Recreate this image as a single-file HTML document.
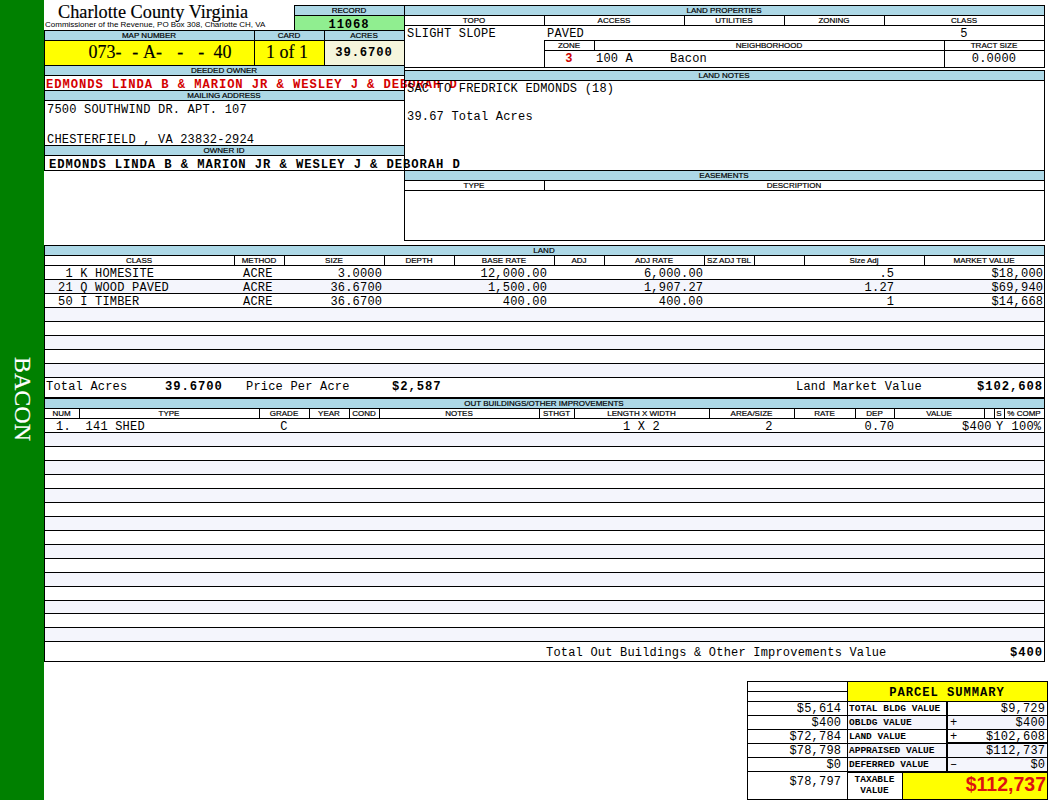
<!DOCTYPE html>
<html><head><meta charset="utf-8"><style>
html,body{margin:0;padding:0;background:#fff;width:1050px;height:800px;overflow:hidden;position:relative}
div{position:absolute;box-sizing:border-box}
.t{white-space:nowrap}
</style></head><body>
<div style="left:0px;top:0px;width:44px;height:800px;background:#008000"></div>
<div class="t" style="left:58px;top:3.17px;font-family:'Liberation Serif',serif;font-size:18.3px;line-height:18.3px;color:#000;-webkit-text-stroke:0.15px #000;">Charlotte County Virginia</div>
<div class="t" style="left:45px;top:21.23px;font-family:'Liberation Sans',sans-serif;font-size:8.001px;line-height:8.001px;color:#000;">Commissioner of the Revenue, PO Box 308, Charlotte CH, VA</div>
<div style="left:295px;top:6px;width:109px;height:9px;background:#add8e6"></div>
<div style="left:295px;top:16px;width:109px;height:14px;background:#90ee90"></div>
<div style="left:294px;top:5px;width:111px;height:1px;background:#000"></div>
<div style="left:294px;top:30px;width:111px;height:1px;background:#000"></div>
<div style="left:294px;top:5px;width:1px;height:26px;background:#000"></div>
<div style="left:404px;top:5px;width:1px;height:26px;background:#000"></div>
<div style="left:294px;top:15px;width:111px;height:1px;background:#000"></div>
<div class="t" style="left:294px;top:7.23px;font-family:'Liberation Sans',sans-serif;font-size:8px;line-height:8px;color:#000;width:110px;text-align:center;-webkit-text-stroke:0.2px #000;">RECORD</div>
<div class="t" style="left:294px;top:18.65px;font-family:'Liberation Mono',monospace;font-size:12.2px;line-height:12.2px;color:#000;font-weight:bold;width:110px;text-align:center;letter-spacing:0.92px;">11068</div>
<div style="left:45px;top:31px;width:359px;height:9px;background:#add8e6"></div>
<div style="left:45px;top:41px;width:209px;height:24px;background:#ffff00"></div>
<div style="left:255px;top:41px;width:69px;height:24px;background:#ffff00"></div>
<div style="left:325px;top:41px;width:79px;height:24px;background:#f5f5dc"></div>
<div style="left:44px;top:30px;width:361px;height:1px;background:#000"></div>
<div style="left:44px;top:65px;width:361px;height:1px;background:#000"></div>
<div style="left:44px;top:30px;width:1px;height:36px;background:#000"></div>
<div style="left:404px;top:30px;width:1px;height:36px;background:#000"></div>
<div style="left:44px;top:40px;width:361px;height:1px;background:#000"></div>
<div style="left:254px;top:30px;width:1px;height:36px;background:#000"></div>
<div style="left:324px;top:30px;width:1px;height:36px;background:#000"></div>
<div class="t" style="left:44px;top:32.23px;font-family:'Liberation Sans',sans-serif;font-size:8px;line-height:8px;color:#000;width:210px;text-align:center;-webkit-text-stroke:0.2px #000;">MAP NUMBER</div>
<div class="t" style="left:254px;top:32.23px;font-family:'Liberation Sans',sans-serif;font-size:8px;line-height:8px;color:#000;width:70px;text-align:center;-webkit-text-stroke:0.2px #000;">CARD</div>
<div class="t" style="left:324px;top:32.23px;font-family:'Liberation Sans',sans-serif;font-size:8px;line-height:8px;color:#000;width:80px;text-align:center;-webkit-text-stroke:0.2px #000;">ACRES</div>
<div class="t" style="left:88.5px;top:42.92px;font-family:'Liberation Serif',serif;font-size:18px;line-height:18px;color:#000;-webkit-text-stroke:0.15px #000;">073-</div>
<div class="t" style="left:132.3px;top:42.92px;font-family:'Liberation Serif',serif;font-size:18px;line-height:18px;color:#000;-webkit-text-stroke:0.15px #000;">-</div>
<div class="t" style="left:143px;top:42.92px;font-family:'Liberation Serif',serif;font-size:18px;line-height:18px;color:#000;-webkit-text-stroke:0.15px #000;">A-</div>
<div class="t" style="left:177.2px;top:42.92px;font-family:'Liberation Serif',serif;font-size:18px;line-height:18px;color:#000;-webkit-text-stroke:0.15px #000;">-</div>
<div class="t" style="left:198.2px;top:42.92px;font-family:'Liberation Serif',serif;font-size:18px;line-height:18px;color:#000;-webkit-text-stroke:0.15px #000;">-</div>
<div class="t" style="left:213.6px;top:42.92px;font-family:'Liberation Serif',serif;font-size:18px;line-height:18px;color:#000;-webkit-text-stroke:0.15px #000;">40</div>
<div class="t" style="left:266px;top:42.92px;font-family:'Liberation Serif',serif;font-size:18px;line-height:18px;color:#000;-webkit-text-stroke:0.15px #000;white-space:pre;">1 of 1</div>
<div class="t" style="left:324px;top:46.65px;font-family:'Liberation Mono',monospace;font-size:12.2px;line-height:12.2px;color:#000;font-weight:bold;width:80px;text-align:center;letter-spacing:0.92px;">39.6700</div>
<div style="left:45px;top:66px;width:359px;height:9px;background:#add8e6"></div>
<div style="left:45px;top:91px;width:359px;height:9px;background:#add8e6"></div>
<div style="left:45px;top:146px;width:359px;height:9px;background:#add8e6"></div>
<div style="left:44px;top:65px;width:1px;height:106px;background:#000"></div>
<div style="left:404px;top:5px;width:1px;height:166px;background:#000"></div>
<div style="left:44px;top:75px;width:361px;height:1px;background:#000"></div>
<div style="left:44px;top:90px;width:361px;height:1px;background:#000"></div>
<div style="left:44px;top:100px;width:361px;height:1px;background:#000"></div>
<div style="left:44px;top:145px;width:361px;height:1px;background:#000"></div>
<div style="left:44px;top:155px;width:361px;height:1px;background:#000"></div>
<div style="left:44px;top:170px;width:361px;height:1px;background:#000"></div>
<div class="t" style="left:44px;top:67.23px;font-family:'Liberation Sans',sans-serif;font-size:8px;line-height:8px;color:#000;width:360px;text-align:center;-webkit-text-stroke:0.2px #000;">DEEDED OWNER</div>
<div class="t" style="left:44px;top:92.23px;font-family:'Liberation Sans',sans-serif;font-size:8px;line-height:8px;color:#000;width:360px;text-align:center;-webkit-text-stroke:0.2px #000;">MAILING ADDRESS</div>
<div class="t" style="left:44px;top:147.23px;font-family:'Liberation Sans',sans-serif;font-size:8px;line-height:8px;color:#000;width:360px;text-align:center;-webkit-text-stroke:0.2px #000;">OWNER ID</div>
<div class="t" style="left:46px;top:78.65px;font-family:'Liberation Mono',monospace;font-size:12.2px;line-height:12.2px;color:#d40000;font-weight:bold;letter-spacing:0.92px;white-space:pre;">EDMONDS LINDA B &amp; MARION JR &amp; WESLEY J &amp; DEBORAH D</div>
<div class="t" style="left:47px;top:103.80px;font-family:'Liberation Mono',monospace;font-size:12.0px;line-height:12.0px;color:#000;letter-spacing:0.2px;">7500 SOUTHWIND DR. APT. 107</div>
<div class="t" style="left:47px;top:133.80px;font-family:'Liberation Mono',monospace;font-size:12.0px;line-height:12.0px;color:#000;letter-spacing:0.2px;">CHESTERFIELD , VA 23832-2924</div>
<div class="t" style="left:49px;top:158.65px;font-family:'Liberation Mono',monospace;font-size:12.2px;line-height:12.2px;color:#000;font-weight:bold;letter-spacing:0.92px;white-space:pre;">EDMONDS LINDA B &amp; MARION JR &amp; WESLEY J &amp; DEBORAH D</div>
<div style="left:405px;top:6px;width:639px;height:9px;background:#add8e6"></div>
<div style="left:404px;top:5px;width:641px;height:1px;background:#000"></div>
<div style="left:404px;top:67px;width:641px;height:1px;background:#000"></div>
<div style="left:404px;top:5px;width:1px;height:63px;background:#000"></div>
<div style="left:1044px;top:5px;width:1px;height:63px;background:#000"></div>
<div style="left:404px;top:15px;width:641px;height:1px;background:#000"></div>
<div style="left:404px;top:25px;width:641px;height:1px;background:#000"></div>
<div style="left:544px;top:15px;width:1px;height:11px;background:#000"></div>
<div style="left:684px;top:15px;width:1px;height:11px;background:#000"></div>
<div style="left:784px;top:15px;width:1px;height:11px;background:#000"></div>
<div style="left:884px;top:15px;width:1px;height:11px;background:#000"></div>
<div class="t" style="left:404px;top:7.23px;font-family:'Liberation Sans',sans-serif;font-size:8px;line-height:8px;color:#000;width:640px;text-align:center;-webkit-text-stroke:0.2px #000;">LAND PROPERTIES</div>
<div class="t" style="left:404px;top:17.23px;font-family:'Liberation Sans',sans-serif;font-size:8px;line-height:8px;color:#000;width:140px;text-align:center;-webkit-text-stroke:0.2px #000;">TOPO</div>
<div class="t" style="left:544px;top:17.23px;font-family:'Liberation Sans',sans-serif;font-size:8px;line-height:8px;color:#000;width:140px;text-align:center;-webkit-text-stroke:0.2px #000;">ACCESS</div>
<div class="t" style="left:684px;top:17.23px;font-family:'Liberation Sans',sans-serif;font-size:8px;line-height:8px;color:#000;width:100px;text-align:center;-webkit-text-stroke:0.2px #000;">UTILITIES</div>
<div class="t" style="left:784px;top:17.23px;font-family:'Liberation Sans',sans-serif;font-size:8px;line-height:8px;color:#000;width:100px;text-align:center;-webkit-text-stroke:0.2px #000;">ZONING</div>
<div class="t" style="left:884px;top:17.23px;font-family:'Liberation Sans',sans-serif;font-size:8px;line-height:8px;color:#000;width:160px;text-align:center;-webkit-text-stroke:0.2px #000;">CLASS</div>
<div class="t" style="left:407px;top:27.80px;font-family:'Liberation Mono',monospace;font-size:12.0px;line-height:12.0px;color:#000;letter-spacing:0.2px;">SLIGHT SLOPE</div>
<div class="t" style="left:547px;top:27.80px;font-family:'Liberation Mono',monospace;font-size:12.0px;line-height:12.0px;color:#000;letter-spacing:0.2px;">PAVED</div>
<div class="t" style="left:884px;top:27.80px;font-family:'Liberation Mono',monospace;font-size:12.0px;line-height:12.0px;color:#000;width:160px;text-align:center;letter-spacing:0.2px;">5</div>
<div style="left:544px;top:40px;width:501px;height:1px;background:#000"></div>
<div style="left:544px;top:67px;width:501px;height:1px;background:#000"></div>
<div style="left:544px;top:40px;width:1px;height:28px;background:#000"></div>
<div style="left:1044px;top:40px;width:1px;height:28px;background:#000"></div>
<div style="left:544px;top:50px;width:501px;height:1px;background:#000"></div>
<div style="left:594px;top:40px;width:1px;height:11px;background:#000"></div>
<div style="left:944px;top:40px;width:1px;height:28px;background:#000"></div>
<div class="t" style="left:544px;top:42.23px;font-family:'Liberation Sans',sans-serif;font-size:8px;line-height:8px;color:#000;width:50px;text-align:center;-webkit-text-stroke:0.2px #000;">ZONE</div>
<div class="t" style="left:594px;top:42.23px;font-family:'Liberation Sans',sans-serif;font-size:8px;line-height:8px;color:#000;width:350px;text-align:center;-webkit-text-stroke:0.2px #000;">NEIGHBORHOOD</div>
<div class="t" style="left:944px;top:42.23px;font-family:'Liberation Sans',sans-serif;font-size:8px;line-height:8px;color:#000;width:100px;text-align:center;-webkit-text-stroke:0.2px #000;">TRACT SIZE</div>
<div class="t" style="left:544px;top:52.80px;font-family:'Liberation Mono',monospace;font-size:12.0px;line-height:12.0px;color:#cc0000;font-weight:bold;width:50px;text-align:center;letter-spacing:0.2px;">3</div>
<div class="t" style="left:596px;top:52.80px;font-family:'Liberation Mono',monospace;font-size:12.0px;line-height:12.0px;color:#000;letter-spacing:0.2px;white-space:pre;">100 A     Bacon</div>
<div class="t" style="left:944px;top:52.80px;font-family:'Liberation Mono',monospace;font-size:12.0px;line-height:12.0px;color:#000;width:100px;text-align:center;letter-spacing:0.2px;">0.0000</div>
<div style="left:405px;top:71px;width:639px;height:9px;background:#add8e6"></div>
<div style="left:404px;top:70px;width:641px;height:1px;background:#000"></div>
<div style="left:404px;top:80px;width:641px;height:1px;background:#000"></div>
<div style="left:404px;top:70px;width:1px;height:101px;background:#000"></div>
<div style="left:1044px;top:70px;width:1px;height:101px;background:#000"></div>
<div class="t" style="left:404px;top:72.23px;font-family:'Liberation Sans',sans-serif;font-size:8px;line-height:8px;color:#000;width:640px;text-align:center;-webkit-text-stroke:0.2px #000;">LAND NOTES</div>
<div class="t" style="left:407px;top:82.80px;font-family:'Liberation Mono',monospace;font-size:12.0px;line-height:12.0px;color:#000;letter-spacing:0.2px;white-space:pre;">SAC TO FREDRICK EDMONDS (18)</div>
<div class="t" style="left:407px;top:110.80px;font-family:'Liberation Mono',monospace;font-size:12.0px;line-height:12.0px;color:#000;letter-spacing:0.2px;white-space:pre;">39.67 Total Acres</div>
<div style="left:405px;top:171px;width:639px;height:9px;background:#add8e6"></div>
<div style="left:404px;top:170px;width:641px;height:1px;background:#000"></div>
<div style="left:404px;top:240px;width:641px;height:1px;background:#000"></div>
<div style="left:404px;top:170px;width:1px;height:71px;background:#000"></div>
<div style="left:1044px;top:170px;width:1px;height:71px;background:#000"></div>
<div style="left:404px;top:180px;width:641px;height:1px;background:#000"></div>
<div style="left:404px;top:190px;width:641px;height:1px;background:#000"></div>
<div style="left:544px;top:180px;width:1px;height:11px;background:#000"></div>
<div class="t" style="left:404px;top:172.23px;font-family:'Liberation Sans',sans-serif;font-size:8px;line-height:8px;color:#000;width:640px;text-align:center;-webkit-text-stroke:0.2px #000;">EASEMENTS</div>
<div class="t" style="left:404px;top:182.23px;font-family:'Liberation Sans',sans-serif;font-size:8px;line-height:8px;color:#000;width:140px;text-align:center;-webkit-text-stroke:0.2px #000;">TYPE</div>
<div class="t" style="left:544px;top:182.23px;font-family:'Liberation Sans',sans-serif;font-size:8px;line-height:8px;color:#000;width:500px;text-align:center;-webkit-text-stroke:0.2px #000;">DESCRIPTION</div>
<div style="left:45px;top:246px;width:999px;height:9px;background:#add8e6"></div>
<div style="left:45px;top:280px;width:999px;height:13px;background:#f4f5fc"></div>
<div style="left:45px;top:308px;width:999px;height:13px;background:#f4f5fc"></div>
<div style="left:45px;top:336px;width:999px;height:13px;background:#f4f5fc"></div>
<div style="left:45px;top:364px;width:999px;height:13px;background:#f4f5fc"></div>
<div style="left:44px;top:245px;width:1001px;height:1px;background:#000"></div>
<div style="left:44px;top:397px;width:1001px;height:1px;background:#000"></div>
<div style="left:44px;top:245px;width:1px;height:153px;background:#000"></div>
<div style="left:1044px;top:245px;width:1px;height:153px;background:#000"></div>
<div style="left:44px;top:255px;width:1001px;height:1px;background:#000"></div>
<div style="left:44px;top:265px;width:1001px;height:1px;background:#000"></div>
<div style="left:44px;top:279px;width:1001px;height:1px;background:#000"></div>
<div style="left:44px;top:293px;width:1001px;height:1px;background:#000"></div>
<div style="left:44px;top:307px;width:1001px;height:1px;background:#000"></div>
<div style="left:44px;top:321px;width:1001px;height:1px;background:#000"></div>
<div style="left:44px;top:335px;width:1001px;height:1px;background:#000"></div>
<div style="left:44px;top:349px;width:1001px;height:1px;background:#000"></div>
<div style="left:44px;top:363px;width:1001px;height:1px;background:#000"></div>
<div style="left:44px;top:377px;width:1001px;height:1px;background:#000"></div>
<div style="left:234px;top:255px;width:1px;height:11px;background:#000"></div>
<div style="left:284px;top:255px;width:1px;height:11px;background:#000"></div>
<div style="left:384px;top:255px;width:1px;height:11px;background:#000"></div>
<div style="left:454px;top:255px;width:1px;height:11px;background:#000"></div>
<div style="left:554px;top:255px;width:1px;height:11px;background:#000"></div>
<div style="left:604px;top:255px;width:1px;height:11px;background:#000"></div>
<div style="left:704px;top:255px;width:1px;height:11px;background:#000"></div>
<div style="left:754px;top:255px;width:1px;height:11px;background:#000"></div>
<div style="left:804px;top:255px;width:1px;height:11px;background:#000"></div>
<div style="left:924px;top:255px;width:1px;height:11px;background:#000"></div>
<div class="t" style="left:44px;top:247.23px;font-family:'Liberation Sans',sans-serif;font-size:8px;line-height:8px;color:#000;width:1000px;text-align:center;-webkit-text-stroke:0.2px #000;">LAND</div>
<div class="t" style="left:44px;top:257.23px;font-family:'Liberation Sans',sans-serif;font-size:8px;line-height:8px;color:#000;width:190px;text-align:center;-webkit-text-stroke:0.2px #000;">CLASS</div>
<div class="t" style="left:234px;top:257.23px;font-family:'Liberation Sans',sans-serif;font-size:8px;line-height:8px;color:#000;width:50px;text-align:center;-webkit-text-stroke:0.2px #000;">METHOD</div>
<div class="t" style="left:284px;top:257.23px;font-family:'Liberation Sans',sans-serif;font-size:8px;line-height:8px;color:#000;width:100px;text-align:center;-webkit-text-stroke:0.2px #000;">SIZE</div>
<div class="t" style="left:384px;top:257.23px;font-family:'Liberation Sans',sans-serif;font-size:8px;line-height:8px;color:#000;width:70px;text-align:center;-webkit-text-stroke:0.2px #000;">DEPTH</div>
<div class="t" style="left:454px;top:257.23px;font-family:'Liberation Sans',sans-serif;font-size:8px;line-height:8px;color:#000;width:100px;text-align:center;-webkit-text-stroke:0.2px #000;">BASE RATE</div>
<div class="t" style="left:554px;top:257.23px;font-family:'Liberation Sans',sans-serif;font-size:8px;line-height:8px;color:#000;width:50px;text-align:center;-webkit-text-stroke:0.2px #000;">ADJ</div>
<div class="t" style="left:604px;top:257.23px;font-family:'Liberation Sans',sans-serif;font-size:8px;line-height:8px;color:#000;width:100px;text-align:center;-webkit-text-stroke:0.2px #000;">ADJ RATE</div>
<div class="t" style="left:704px;top:257.23px;font-family:'Liberation Sans',sans-serif;font-size:8px;line-height:8px;color:#000;width:50px;text-align:center;-webkit-text-stroke:0.2px #000;">SZ ADJ TBL</div>
<div class="t" style="left:754px;top:257.23px;font-family:'Liberation Sans',sans-serif;font-size:8px;line-height:8px;color:#000;width:50px;text-align:center;-webkit-text-stroke:0.2px #000;"></div>
<div class="t" style="left:804px;top:257.23px;font-family:'Liberation Sans',sans-serif;font-size:8px;line-height:8px;color:#000;width:120px;text-align:center;-webkit-text-stroke:0.2px #000;">Size Adj</div>
<div class="t" style="left:924px;top:257.23px;font-family:'Liberation Sans',sans-serif;font-size:8px;line-height:8px;color:#000;width:120px;text-align:center;-webkit-text-stroke:0.2px #000;">MARKET VALUE</div>
<div class="t" style="left:58px;top:268.30px;font-family:'Liberation Mono',monospace;font-size:12.0px;line-height:12.0px;color:#000;letter-spacing:0.2px;white-space:pre;"> 1 K HOMESITE</div>
<div class="t" style="left:243px;top:268.30px;font-family:'Liberation Mono',monospace;font-size:12.0px;line-height:12.0px;color:#000;letter-spacing:0.2px;">ACRE</div>
<div class="t" style="left:284px;top:268.30px;font-family:'Liberation Mono',monospace;font-size:12.0px;line-height:12.0px;color:#000;width:98.2px;text-align:right;letter-spacing:0.2px;">3.0000</div>
<div class="t" style="left:454px;top:268.30px;font-family:'Liberation Mono',monospace;font-size:12.0px;line-height:12.0px;color:#000;width:93.2px;text-align:right;letter-spacing:0.2px;">12,000.00</div>
<div class="t" style="left:604px;top:268.30px;font-family:'Liberation Mono',monospace;font-size:12.0px;line-height:12.0px;color:#000;width:99.2px;text-align:right;letter-spacing:0.2px;">6,000.00</div>
<div class="t" style="left:804px;top:268.30px;font-family:'Liberation Mono',monospace;font-size:12.0px;line-height:12.0px;color:#000;width:90.2px;text-align:right;letter-spacing:0.2px;">.5</div>
<div class="t" style="left:924px;top:268.30px;font-family:'Liberation Mono',monospace;font-size:12.0px;line-height:12.0px;color:#000;width:119.2px;text-align:right;letter-spacing:0.2px;">$18,000</div>
<div class="t" style="left:58px;top:282.30px;font-family:'Liberation Mono',monospace;font-size:12.0px;line-height:12.0px;color:#000;letter-spacing:0.2px;white-space:pre;">21 Q WOOD PAVED</div>
<div class="t" style="left:243px;top:282.30px;font-family:'Liberation Mono',monospace;font-size:12.0px;line-height:12.0px;color:#000;letter-spacing:0.2px;">ACRE</div>
<div class="t" style="left:284px;top:282.30px;font-family:'Liberation Mono',monospace;font-size:12.0px;line-height:12.0px;color:#000;width:98.2px;text-align:right;letter-spacing:0.2px;">36.6700</div>
<div class="t" style="left:454px;top:282.30px;font-family:'Liberation Mono',monospace;font-size:12.0px;line-height:12.0px;color:#000;width:93.2px;text-align:right;letter-spacing:0.2px;">1,500.00</div>
<div class="t" style="left:604px;top:282.30px;font-family:'Liberation Mono',monospace;font-size:12.0px;line-height:12.0px;color:#000;width:99.2px;text-align:right;letter-spacing:0.2px;">1,907.27</div>
<div class="t" style="left:804px;top:282.30px;font-family:'Liberation Mono',monospace;font-size:12.0px;line-height:12.0px;color:#000;width:90.2px;text-align:right;letter-spacing:0.2px;">1.27</div>
<div class="t" style="left:924px;top:282.30px;font-family:'Liberation Mono',monospace;font-size:12.0px;line-height:12.0px;color:#000;width:119.2px;text-align:right;letter-spacing:0.2px;">$69,940</div>
<div class="t" style="left:58px;top:296.30px;font-family:'Liberation Mono',monospace;font-size:12.0px;line-height:12.0px;color:#000;letter-spacing:0.2px;white-space:pre;">50 I TIMBER</div>
<div class="t" style="left:243px;top:296.30px;font-family:'Liberation Mono',monospace;font-size:12.0px;line-height:12.0px;color:#000;letter-spacing:0.2px;">ACRE</div>
<div class="t" style="left:284px;top:296.30px;font-family:'Liberation Mono',monospace;font-size:12.0px;line-height:12.0px;color:#000;width:98.2px;text-align:right;letter-spacing:0.2px;">36.6700</div>
<div class="t" style="left:454px;top:296.30px;font-family:'Liberation Mono',monospace;font-size:12.0px;line-height:12.0px;color:#000;width:93.2px;text-align:right;letter-spacing:0.2px;">400.00</div>
<div class="t" style="left:604px;top:296.30px;font-family:'Liberation Mono',monospace;font-size:12.0px;line-height:12.0px;color:#000;width:99.2px;text-align:right;letter-spacing:0.2px;">400.00</div>
<div class="t" style="left:804px;top:296.30px;font-family:'Liberation Mono',monospace;font-size:12.0px;line-height:12.0px;color:#000;width:90.2px;text-align:right;letter-spacing:0.2px;">1</div>
<div class="t" style="left:924px;top:296.30px;font-family:'Liberation Mono',monospace;font-size:12.0px;line-height:12.0px;color:#000;width:119.2px;text-align:right;letter-spacing:0.2px;">$14,668</div>
<div class="t" style="left:46px;top:380.80px;font-family:'Liberation Mono',monospace;font-size:12.0px;line-height:12.0px;color:#000;letter-spacing:0.2px;white-space:pre;">Total Acres</div>
<div class="t" style="left:165px;top:380.65px;font-family:'Liberation Mono',monospace;font-size:12.2px;line-height:12.2px;color:#000;font-weight:bold;letter-spacing:0.92px;">39.6700</div>
<div class="t" style="left:246px;top:380.80px;font-family:'Liberation Mono',monospace;font-size:12.0px;line-height:12.0px;color:#000;letter-spacing:0.2px;white-space:pre;">Price Per Acre</div>
<div class="t" style="left:392px;top:380.65px;font-family:'Liberation Mono',monospace;font-size:12.2px;line-height:12.2px;color:#000;font-weight:bold;letter-spacing:0.92px;">$2,587</div>
<div class="t" style="left:796px;top:380.80px;font-family:'Liberation Mono',monospace;font-size:12.0px;line-height:12.0px;color:#000;letter-spacing:0.2px;white-space:pre;">Land Market Value</div>
<div class="t" style="left:924px;top:380.65px;font-family:'Liberation Mono',monospace;font-size:12.2px;line-height:12.2px;color:#000;font-weight:bold;width:118.92px;text-align:right;letter-spacing:0.92px;">$102,608</div>
<div style="left:45px;top:399px;width:999px;height:9px;background:#add8e6"></div>
<div style="left:45px;top:433px;width:999px;height:13px;background:#f4f5fc"></div>
<div style="left:45px;top:461px;width:999px;height:13px;background:#f4f5fc"></div>
<div style="left:45px;top:489px;width:999px;height:13px;background:#f4f5fc"></div>
<div style="left:45px;top:517px;width:999px;height:13px;background:#f4f5fc"></div>
<div style="left:45px;top:545px;width:999px;height:13px;background:#f4f5fc"></div>
<div style="left:45px;top:573px;width:999px;height:13px;background:#f4f5fc"></div>
<div style="left:45px;top:601px;width:999px;height:12px;background:#f4f5fc"></div>
<div style="left:45px;top:628px;width:999px;height:13px;background:#f4f5fc"></div>
<div style="left:44px;top:398px;width:1001px;height:1px;background:#000"></div>
<div style="left:44px;top:397px;width:1001px;height:1px;background:#000"></div>
<div style="left:44px;top:661px;width:1001px;height:1px;background:#000"></div>
<div style="left:44px;top:397px;width:1px;height:265px;background:#000"></div>
<div style="left:1044px;top:397px;width:1px;height:265px;background:#000"></div>
<div style="left:44px;top:408px;width:1001px;height:1px;background:#000"></div>
<div style="left:44px;top:418px;width:1001px;height:1px;background:#000"></div>
<div style="left:44px;top:432px;width:1001px;height:1px;background:#000"></div>
<div style="left:44px;top:446px;width:1001px;height:1px;background:#000"></div>
<div style="left:44px;top:460px;width:1001px;height:1px;background:#000"></div>
<div style="left:44px;top:474px;width:1001px;height:1px;background:#000"></div>
<div style="left:44px;top:488px;width:1001px;height:1px;background:#000"></div>
<div style="left:44px;top:502px;width:1001px;height:1px;background:#000"></div>
<div style="left:44px;top:516px;width:1001px;height:1px;background:#000"></div>
<div style="left:44px;top:530px;width:1001px;height:1px;background:#000"></div>
<div style="left:44px;top:544px;width:1001px;height:1px;background:#000"></div>
<div style="left:44px;top:558px;width:1001px;height:1px;background:#000"></div>
<div style="left:44px;top:572px;width:1001px;height:1px;background:#000"></div>
<div style="left:44px;top:586px;width:1001px;height:1px;background:#000"></div>
<div style="left:44px;top:600px;width:1001px;height:1px;background:#000"></div>
<div style="left:44px;top:613px;width:1001px;height:1px;background:#000"></div>
<div style="left:44px;top:627px;width:1001px;height:1px;background:#000"></div>
<div style="left:44px;top:641px;width:1001px;height:1px;background:#000"></div>
<div style="left:79px;top:408px;width:1px;height:11px;background:#000"></div>
<div style="left:259px;top:408px;width:1px;height:11px;background:#000"></div>
<div style="left:309px;top:408px;width:1px;height:11px;background:#000"></div>
<div style="left:349px;top:408px;width:1px;height:11px;background:#000"></div>
<div style="left:379px;top:408px;width:1px;height:11px;background:#000"></div>
<div style="left:539px;top:408px;width:1px;height:11px;background:#000"></div>
<div style="left:574px;top:408px;width:1px;height:11px;background:#000"></div>
<div style="left:709px;top:408px;width:1px;height:11px;background:#000"></div>
<div style="left:794px;top:408px;width:1px;height:11px;background:#000"></div>
<div style="left:855px;top:408px;width:1px;height:11px;background:#000"></div>
<div style="left:894px;top:408px;width:1px;height:11px;background:#000"></div>
<div style="left:984px;top:408px;width:1px;height:11px;background:#000"></div>
<div style="left:994px;top:408px;width:1px;height:11px;background:#000"></div>
<div style="left:1004px;top:408px;width:1px;height:11px;background:#000"></div>
<div class="t" style="left:44px;top:400.23px;font-family:'Liberation Sans',sans-serif;font-size:8px;line-height:8px;color:#000;width:1000px;text-align:center;-webkit-text-stroke:0.2px #000;">OUT BUILDINGS/OTHER IMPROVEMENTS</div>
<div class="t" style="left:44px;top:410.23px;font-family:'Liberation Sans',sans-serif;font-size:8px;line-height:8px;color:#000;width:35px;text-align:center;-webkit-text-stroke:0.2px #000;">NUM</div>
<div class="t" style="left:79px;top:410.23px;font-family:'Liberation Sans',sans-serif;font-size:8px;line-height:8px;color:#000;width:180px;text-align:center;-webkit-text-stroke:0.2px #000;">TYPE</div>
<div class="t" style="left:259px;top:410.23px;font-family:'Liberation Sans',sans-serif;font-size:8px;line-height:8px;color:#000;width:50px;text-align:center;-webkit-text-stroke:0.2px #000;">GRADE</div>
<div class="t" style="left:309px;top:410.23px;font-family:'Liberation Sans',sans-serif;font-size:8px;line-height:8px;color:#000;width:40px;text-align:center;-webkit-text-stroke:0.2px #000;">YEAR</div>
<div class="t" style="left:349px;top:410.23px;font-family:'Liberation Sans',sans-serif;font-size:8px;line-height:8px;color:#000;width:30px;text-align:center;-webkit-text-stroke:0.2px #000;">COND</div>
<div class="t" style="left:379px;top:410.23px;font-family:'Liberation Sans',sans-serif;font-size:8px;line-height:8px;color:#000;width:160px;text-align:center;-webkit-text-stroke:0.2px #000;">NOTES</div>
<div class="t" style="left:539px;top:410.23px;font-family:'Liberation Sans',sans-serif;font-size:8px;line-height:8px;color:#000;width:35px;text-align:center;-webkit-text-stroke:0.2px #000;">STHGT</div>
<div class="t" style="left:574px;top:410.23px;font-family:'Liberation Sans',sans-serif;font-size:8px;line-height:8px;color:#000;width:135px;text-align:center;-webkit-text-stroke:0.2px #000;">LENGTH X WIDTH</div>
<div class="t" style="left:709px;top:410.23px;font-family:'Liberation Sans',sans-serif;font-size:8px;line-height:8px;color:#000;width:85px;text-align:center;-webkit-text-stroke:0.2px #000;">AREA/SIZE</div>
<div class="t" style="left:794px;top:410.23px;font-family:'Liberation Sans',sans-serif;font-size:8px;line-height:8px;color:#000;width:61px;text-align:center;-webkit-text-stroke:0.2px #000;">RATE</div>
<div class="t" style="left:855px;top:410.23px;font-family:'Liberation Sans',sans-serif;font-size:8px;line-height:8px;color:#000;width:39px;text-align:center;-webkit-text-stroke:0.2px #000;">DEP</div>
<div class="t" style="left:894px;top:410.23px;font-family:'Liberation Sans',sans-serif;font-size:8px;line-height:8px;color:#000;width:90px;text-align:center;-webkit-text-stroke:0.2px #000;">VALUE</div>
<div class="t" style="left:984px;top:410.23px;font-family:'Liberation Sans',sans-serif;font-size:8px;line-height:8px;color:#000;width:10px;text-align:center;-webkit-text-stroke:0.2px #000;"></div>
<div class="t" style="left:994px;top:410.23px;font-family:'Liberation Sans',sans-serif;font-size:8px;line-height:8px;color:#000;width:10px;text-align:center;-webkit-text-stroke:0.2px #000;">S</div>
<div class="t" style="left:1004px;top:410.23px;font-family:'Liberation Sans',sans-serif;font-size:8px;line-height:8px;color:#000;width:40px;text-align:center;-webkit-text-stroke:0.2px #000;">% COMP</div>
<div class="t" style="left:56px;top:420.80px;font-family:'Liberation Mono',monospace;font-size:12.0px;line-height:12.0px;color:#000;letter-spacing:0.2px;white-space:pre;">1.  141 SHED</div>
<div class="t" style="left:259px;top:420.80px;font-family:'Liberation Mono',monospace;font-size:12.0px;line-height:12.0px;color:#000;width:50px;text-align:center;letter-spacing:0.2px;">C</div>
<div class="t" style="left:574px;top:420.80px;font-family:'Liberation Mono',monospace;font-size:12.0px;line-height:12.0px;color:#000;width:135px;text-align:center;letter-spacing:0.2px;white-space:pre;">1 X 2</div>
<div class="t" style="left:709px;top:420.80px;font-family:'Liberation Mono',monospace;font-size:12.0px;line-height:12.0px;color:#000;width:120px;text-align:center;letter-spacing:0.2px;">2</div>
<div class="t" style="left:854px;top:420.80px;font-family:'Liberation Mono',monospace;font-size:12.0px;line-height:12.0px;color:#000;width:40.2px;text-align:right;letter-spacing:0.2px;">0.70</div>
<div class="t" style="left:894px;top:420.80px;font-family:'Liberation Mono',monospace;font-size:12.0px;line-height:12.0px;color:#000;width:97.7px;text-align:right;letter-spacing:0.2px;">$400</div>
<div class="t" style="left:996px;top:420.80px;font-family:'Liberation Mono',monospace;font-size:12.0px;line-height:12.0px;color:#000;letter-spacing:0.2px;">Y</div>
<div class="t" style="left:1004px;top:420.80px;font-family:'Liberation Mono',monospace;font-size:12.0px;line-height:12.0px;color:#000;width:37.2px;text-align:right;letter-spacing:0.2px;">100%</div>
<div class="t" style="left:546px;top:646.80px;font-family:'Liberation Mono',monospace;font-size:12.0px;line-height:12.0px;color:#000;letter-spacing:0.2px;white-space:pre;">Total Out Buildings &amp; Other Improvements Value</div>
<div class="t" style="left:924px;top:646.65px;font-family:'Liberation Mono',monospace;font-size:12.2px;line-height:12.2px;color:#000;font-weight:bold;width:118.92px;text-align:right;letter-spacing:0.92px;">$400</div>
<div style="left:848px;top:682px;width:199px;height:19px;background:#ffff00"></div>
<div style="left:903px;top:773px;width:144px;height:26px;background:#ffff00"></div>
<div style="left:848px;top:716px;width:199px;height:13px;background:#f4f5fc"></div>
<div style="left:848px;top:744px;width:199px;height:13px;background:#f4f5fc"></div>
<div style="left:848px;top:758px;width:199px;height:13px;background:#f4f5fc"></div>
<div style="left:747px;top:681px;width:301px;height:1px;background:#000"></div>
<div style="left:747px;top:799px;width:301px;height:1px;background:#000"></div>
<div style="left:747px;top:681px;width:1px;height:119px;background:#000"></div>
<div style="left:1047px;top:681px;width:1px;height:119px;background:#000"></div>
<div style="left:847px;top:681px;width:1px;height:119px;background:#000"></div>
<div style="left:747px;top:691px;width:101px;height:1px;background:#000"></div>
<div style="left:747px;top:701px;width:301px;height:1px;background:#000"></div>
<div style="left:747px;top:715px;width:301px;height:1px;background:#000"></div>
<div style="left:747px;top:729px;width:301px;height:1px;background:#000"></div>
<div style="left:747px;top:743px;width:301px;height:1px;background:#000"></div>
<div style="left:747px;top:757px;width:301px;height:1px;background:#000"></div>
<div style="left:747px;top:771px;width:301px;height:1px;background:#000"></div>
<div style="left:946px;top:701px;width:2px;height:71px;background:#000"></div>
<div style="left:947px;top:742px;width:101px;height:2px;background:#000"></div>
<div style="left:847px;top:771px;width:201px;height:2px;background:#000"></div>
<div style="left:902px;top:771px;width:1px;height:29px;background:#000"></div>
<div class="t" style="left:847px;top:686.65px;font-family:'Liberation Mono',monospace;font-size:12.2px;line-height:12.2px;color:#000;font-weight:bold;width:200px;text-align:center;letter-spacing:0.92px;white-space:pre;">PARCEL SUMMARY</div>
<div class="t" style="left:747px;top:702.80px;font-family:'Liberation Mono',monospace;font-size:12.0px;line-height:12.0px;color:#000;width:94.2px;text-align:right;letter-spacing:0.2px;">$5,614</div>
<div class="t" style="left:849px;top:703.72px;font-family:'Liberation Mono',monospace;font-size:9.5px;line-height:9.5px;color:#000;font-weight:bold;white-space:pre;">TOTAL BLDG VALUE</div>
<div class="t" style="left:948px;top:702.80px;font-family:'Liberation Mono',monospace;font-size:12.0px;line-height:12.0px;color:#000;width:97.2px;text-align:right;letter-spacing:0.2px;">$9,729</div>
<div class="t" style="left:747px;top:716.80px;font-family:'Liberation Mono',monospace;font-size:12.0px;line-height:12.0px;color:#000;width:94.2px;text-align:right;letter-spacing:0.2px;">$400</div>
<div class="t" style="left:849px;top:717.72px;font-family:'Liberation Mono',monospace;font-size:9.5px;line-height:9.5px;color:#000;font-weight:bold;white-space:pre;">OBLDG VALUE</div>
<div class="t" style="left:948px;top:716.80px;font-family:'Liberation Mono',monospace;font-size:12.0px;line-height:12.0px;color:#000;width:97.2px;text-align:right;letter-spacing:0.2px;">$400</div>
<div class="t" style="left:950px;top:716.80px;font-family:'Liberation Mono',monospace;font-size:12.0px;line-height:12.0px;color:#000;letter-spacing:0.2px;">+</div>
<div class="t" style="left:747px;top:730.80px;font-family:'Liberation Mono',monospace;font-size:12.0px;line-height:12.0px;color:#000;width:94.2px;text-align:right;letter-spacing:0.2px;">$72,784</div>
<div class="t" style="left:849px;top:731.72px;font-family:'Liberation Mono',monospace;font-size:9.5px;line-height:9.5px;color:#000;font-weight:bold;white-space:pre;">LAND VALUE</div>
<div class="t" style="left:948px;top:730.80px;font-family:'Liberation Mono',monospace;font-size:12.0px;line-height:12.0px;color:#000;width:97.2px;text-align:right;letter-spacing:0.2px;">$102,608</div>
<div class="t" style="left:950px;top:730.80px;font-family:'Liberation Mono',monospace;font-size:12.0px;line-height:12.0px;color:#000;letter-spacing:0.2px;">+</div>
<div class="t" style="left:747px;top:744.80px;font-family:'Liberation Mono',monospace;font-size:12.0px;line-height:12.0px;color:#000;width:94.2px;text-align:right;letter-spacing:0.2px;">$78,798</div>
<div class="t" style="left:849px;top:745.72px;font-family:'Liberation Mono',monospace;font-size:9.5px;line-height:9.5px;color:#000;font-weight:bold;white-space:pre;">APPRAISED VALUE</div>
<div class="t" style="left:948px;top:744.80px;font-family:'Liberation Mono',monospace;font-size:12.0px;line-height:12.0px;color:#000;width:97.2px;text-align:right;letter-spacing:0.2px;">$112,737</div>
<div class="t" style="left:747px;top:758.80px;font-family:'Liberation Mono',monospace;font-size:12.0px;line-height:12.0px;color:#000;width:94.2px;text-align:right;letter-spacing:0.2px;">$0</div>
<div class="t" style="left:849px;top:759.72px;font-family:'Liberation Mono',monospace;font-size:9.5px;line-height:9.5px;color:#000;font-weight:bold;white-space:pre;">DEFERRED VALUE</div>
<div class="t" style="left:948px;top:758.80px;font-family:'Liberation Mono',monospace;font-size:12.0px;line-height:12.0px;color:#000;width:97.2px;text-align:right;letter-spacing:0.2px;">$0</div>
<div class="t" style="left:950px;top:758.80px;font-family:'Liberation Mono',monospace;font-size:12.0px;line-height:12.0px;color:#000;letter-spacing:0.2px;">–</div>
<div class="t" style="left:747px;top:775.80px;font-family:'Liberation Mono',monospace;font-size:12.0px;line-height:12.0px;color:#000;width:94.2px;text-align:right;letter-spacing:0.2px;">$78,797</div>
<div class="t" style="left:847px;top:774.72px;font-family:'Liberation Mono',monospace;font-size:9.5px;line-height:9.5px;color:#000;font-weight:bold;width:55px;text-align:center;">TAXABLE</div>
<div class="t" style="left:847px;top:785.72px;font-family:'Liberation Mono',monospace;font-size:9.5px;line-height:9.5px;color:#000;font-weight:bold;width:55px;text-align:center;">VALUE</div>
<div class="t" style="left:903px;top:775.49px;font-family:'Liberation Sans',sans-serif;font-size:19.5px;line-height:19.5px;color:#dd1111;font-weight:bold;width:143px;text-align:right;">$112,737</div>
<div class="t" style="left:23px;top:399px;font-family:'Liberation Serif',serif;font-size:24px;line-height:24px;color:#fff;-webkit-text-stroke:0.2px #fff;transform:translate(-50%,-50%) rotate(90deg);white-space:pre">BACON</div>
</body></html>
